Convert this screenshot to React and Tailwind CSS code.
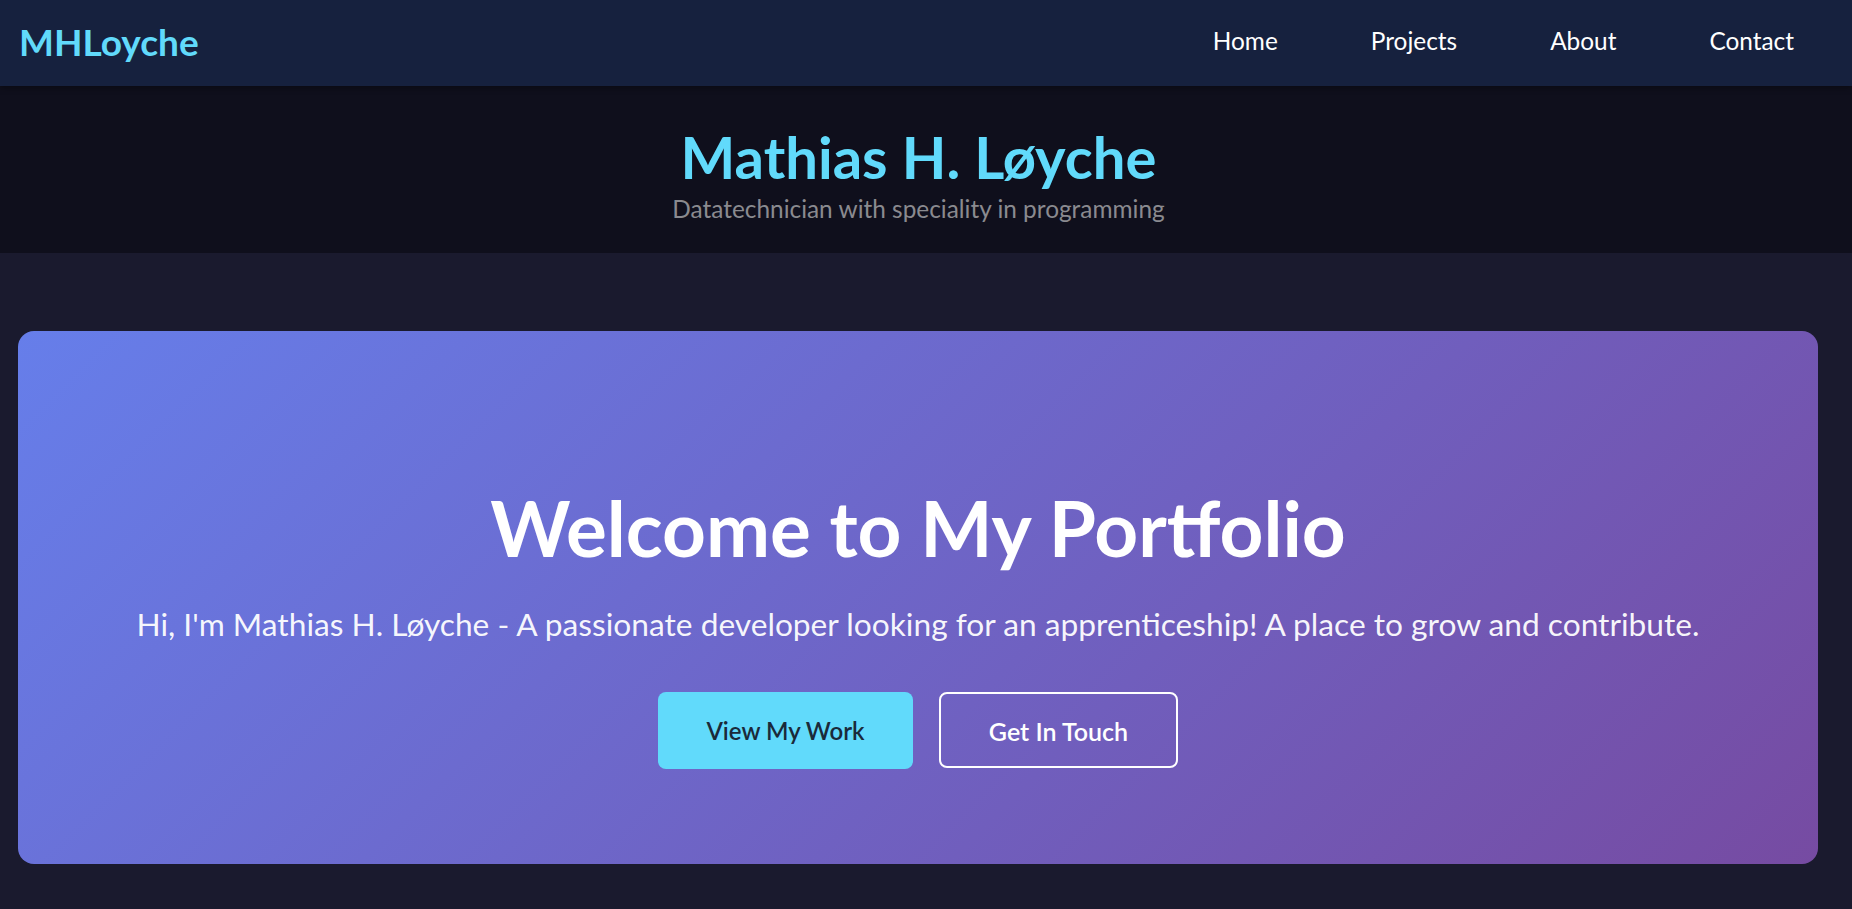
import { useState } from "react";

const links = ["Home", "Projects", "About", "Contact"];

export default function App() {
  const [active, setActive] = useState("Home");

  return (
    <div className="min-h-screen bg-[#1a1a2e] font-['Lato','Noto_Sans',sans-serif] text-white">
      {/* Navbar */}
      <nav className="h-[86px] bg-[#16213e] flex items-center justify-between pl-[19px] pr-[58px] shadow-[0_2px_6px_rgba(0,0,0,0.35)] relative z-10">
        <a href="#" className="text-[37px] font-bold text-[#61dafb] leading-none -mt-[4px]">MHLoyche</a>
        <ul className="flex items-center gap-[93px] -mt-[2px]">
          {links.map((l) => (
            <li key={l}>
              <a
                href="#"
                onClick={() => setActive(l)}
                className={`text-[24.4px] leading-none hover:text-[#61dafb] ${active === l ? "text-white" : "text-white"}`}
              >
                {l}
              </a>
            </li>
          ))}
        </ul>
      </nav>

      {/* Header */}
      <header className="h-[167px] bg-[#0f0f1c] flex flex-col items-center justify-center pt-[8px] pr-[15px]">
        <h1 className="text-[58px] font-bold text-[#61dafb] leading-[1.2]">Mathias H. Løyche</h1>
        <p className="text-[24.4px] text-[#8a8a8f] leading-[1.3] mt-[1px]">Datatechnician with speciality in programming</p>
      </header>

      {/* Hero */}
      <main className="pl-[18px] pr-[34px] pt-[78px] pb-[45px]">
        <section className="h-[533px] rounded-[16px] bg-[linear-gradient(135deg,#667eea_0%,#764ba2_100%)] flex flex-col items-center justify-center text-center pt-[56px]">
          <h2 className="text-[76.5px] font-bold leading-[1.2]">Welcome to My Portfolio</h2>
          <p className="text-[31.7px] leading-[1.5] mt-[27px] text-white/95">
            Hi, I'm Mathias H. Løyche - A passionate developer looking for an apprenticeship! A place to grow and contribute.
          </p>
          <div className="flex gap-[26px] mt-[44px]">
            <a href="#" className="w-[255px] h-[77px] flex items-center justify-center rounded-[8px] bg-[#61dafb] text-[#1a2a3a] text-[24px] font-semibold">
              View My Work
            </a>
            <a href="#" className="w-[239px] h-[76px] flex items-center justify-center rounded-[8px] border-2 border-white text-white text-[25px] font-semibold pt-[4px]">
              Get In Touch
            </a>
          </div>
        </section>
      </main>
    </div>
  );
}
